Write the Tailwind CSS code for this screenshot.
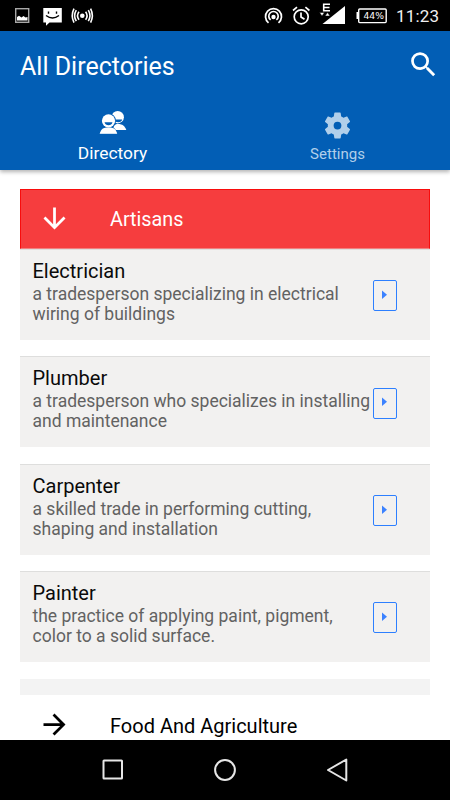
<!DOCTYPE html>
<html lang="en">
<head>
<meta charset="utf-8">
<title>All Directories</title>
<script src="https://cdn.jsdelivr.net/npm/@tailwindcss/browser@4"></script>
</head>
<body class="w-[450px] h-[800px] overflow-hidden bg-white font-[Roboto,sans-serif] flex flex-col">
<div class="h-[31px] shrink-0 bg-black flex items-center justify-between text-white">
  <svg width="100" height="31" viewBox="0 0 100 31" fill="none">
    <rect x="15.700" y="8.700" width="13" height="13.600" stroke="#a8a8a8" stroke-width="1.400"/>
    <path d="M17 20.500V17l2-1.200 2.500 1.700 2-1.500 2 1.500 2-.5v3.500z" fill="#fff"/>
    <path d="M43.300 8h18.500v14.500H49.500L46 25.800v-3.300h-2.700z" fill="#fff"/>
    <path d="M48.500 11.500v2.300M56.500 11.500v2.300M46 15.500q6.500 5 13 0" stroke="#000" stroke-width="1.400"/>
    <circle cx="82.300" cy="15.700" r="2.300" fill="#fff"/>
    <path d="M79 11.700q-3 4 0 8M85.600 11.700q3 4 0 8M76.300 10.200q-3.300 5.500 0 11M88.300 10.200q3.300 5.500 0 11M74 8.700q-3.500 7 0 14M90.600 8.700q3.500 7 0 14" stroke="#fff" stroke-width="1.600"/>
  </svg>
  <div class="flex">
    <svg width="140" height="31" viewBox="250 0 140 31" fill="none" stroke="#fff" stroke-width="1.700">
      <path d="M268.500 22.800a8 8 0 1 1 10 0M270.600 19.900a4.700 4.700 0 1 1 5.800 0"/>
      <circle cx="273.500" cy="17" r="2.200" fill="#fff" stroke="none"/>
      <circle cx="301.200" cy="16.800" r="7"/><path d="M301 12.500v4.500l3.500 2.300M293 10.500l4-3.300M309.400 10.500l-4-3.300"/>
      <path d="M345 6v18h-22.500z" fill="#fff" stroke="none"/>
      <path d="M330 4.200h-6.300v6.600h6.300M323.700 7.500h5.800" stroke-width="1.600"/>
      <path d="M319.500 12.500h5l-2.500 3.500zM325 16l2.500-3.500 2.500 3.500z" fill="#fff" stroke="#000" stroke-width=".5"/>
      <rect x="358.700" y="9" width="27.500" height="13.600" rx="1" stroke-width="1.400"/><path d="M357.300 12v7" stroke-width="1.600"/>
      <text x="363.500" y="19" textLength="20.500" lengthAdjust="spacingAndGlyphs" fill="#fff" stroke="none" font-family="DejaVu Sans" font-size="9">44%</text>
    </svg>
    <span class="w-[60px] pl-[6px] pt-[2px] leading-[29px] text-[17px] tracking-[.2px] text-[#f0f0f0]">11:23</span>
  </div>
</div>
<header class="relative h-[139px] shrink-0 bg-[#025eb5] text-white shadow-[0_2px_4px_rgba(0,0,0,.3)] flex flex-col">
  <div class="h-[70px] flex items-center justify-between pl-[20px] pr-[10.500px]">
    <h1 class="text-[25px] leading-[30px] pt-[2px]">All Directories</h1>
    <svg class="mb-[3px]" width="33" height="33" viewBox="0 0 24 24" fill="currentColor"><path d="M15.500 14h-.79l-.28-.27A6.471 6.471 0 0 0 16 9.500 6.500 6.500 0 1 0 9.500 16c1.610 0 3.090-.59 4.230-1.570l.27.28v.79l5 4.990L20.490 19l-4.990-5zm-6 0C7.010 14 5 11.990 5 9.500S7.010 5 9.500 5 14 7.010 14 9.500 11.990 14 9.500 14z"/></svg>
  </div>
  <nav class="grid grid-cols-2 h-[69px]">
    <div class="flex flex-col items-center pt-[9px]">
      <svg width="28" height="25" viewBox="0 0 28 25" fill="#fff">
        <circle cx="18.700" cy="7.200" r="6.200"/><path d="M16.500 9.500h6.700c-.5 2.800-3.500 3.300-6.700 2.300z" fill="#025eb5"/>
        <path d="M14 20c.5-4.500 2-6 5-6 4.500 0 6.800 2 8.300 6z"/>
        <g stroke="#025eb5" stroke-width="1.600"><path d="M.7 23.800c1.200-4.800 4-6.800 8.800-6.800s7.500 2 8.700 6.800z" stroke-width="1"/><circle cx="9.500" cy="10.800" r="6.700"/></g>
        <circle cx="9.500" cy="10.800" r="6.600"/>
        <path d="M.7 23.800c1.200-4.800 4-6.300 8.800-6.300s7.500 1.500 8.700 6.300z"/>
        <path d="M5.500 12.300h8c-.6 3.900-7.400 3.900-8 0z" fill="#025eb5"/>
      </svg>
      <span class="text-[17.400px] leading-[20px] mt-[8px]">Directory</span>
    </div>
    <div class="flex flex-col items-center pt-[9px] text-[#b1cfea]">
      <svg width="31" height="31" viewBox="0 0 24 24" fill="currentColor"><path d="M19.430 12.980c.04-.32.07-.64.07-.98s-.03-.66-.07-.98l2.110-1.650c.19-.15.24-.42.12-.64l-2-3.460c-.12-.22-.39-.3-.61-.22l-2.490 1c-.52-.4-1.080-.73-1.690-.98l-.38-2.650A.488.488 0 0 0 14 2h-4c-.25 0-.46.18-.49.42l-.38 2.650c-.61.25-1.170.59-1.690.98l-2.490-1c-.23-.09-.49 0-.61.22l-2 3.460c-.13.22-.07.49.12.64l2.110 1.650c-.04.32-.07.65-.07.98s.03.66.07.98l-2.110 1.650c-.19.15-.24.42-.12.64l2 3.460c.12.22.39.3.61.22l2.490-1c.52.4 1.080.73 1.690.98l.38 2.650c.03.24.24.42.49.42h4c.25 0 .46-.18.49-.42l.38-2.650c.61-.25 1.170-.59 1.690-.98l2.490 1c.23.09.49 0 .61-.22l2-3.460c.12-.22.07-.49-.12-.64zM12 15a3 3 0 1 1 0-6 3 3 0 0 1 0 6z"/></svg>
      <span class="text-[15px] leading-[18px] mt-[4px]">Settings</span>
    </div>
  </nav>
</header>
<main class="h-[570px] shrink-0 overflow-hidden px-[20px] pt-[19px]">
  <div class="h-[60px] bg-[#f63d3e] border border-b-[#f08080] border-[#f80c0c] flex items-center pl-[17px] text-white">
    <svg class="mb-[2px]" width="33" height="33" viewBox="0 0 24 24" fill="currentColor"><path d="M20 12l-1.410-1.410L13 16.170V4h-2v12.170l-5.580-5.590L4 12l8 8z"/></svg>
    <span class="ml-[39px] pt-[2px] text-[19.800px]">Artisans</span>
  </div>
  <div id="list" class="flex flex-col gap-[16.400px]"></div>
  <div class="mt-[17px] h-[16px] bg-[#f3f3f3]"></div>
  <div class="h-[60px] flex items-center pl-[18px] text-black">
    <svg class="mb-[2px]" width="33" height="33" viewBox="0 0 24 24" fill="currentColor"><path d="M12 4l-1.410 1.410L16.170 11H4v2h12.170l-5.580 5.590L12 20l8-8z"/></svg>
    <span class="ml-[39px] pt-[2px] text-[20px]">Food And Agriculture</span>
  </div>
</main>
<footer class="h-[60px] shrink-0 bg-black flex items-center justify-center gap-[82px]">
  <svg width="30" height="30" viewBox="0 0 30 30" fill="none" stroke="#e6e6e6" stroke-width="2"><rect x="5.500" y="5.500" width="18.500" height="18" rx=".5"/></svg>
  <svg width="30" height="30" viewBox="0 0 30 30" fill="none" stroke="#e6e6e6" stroke-width="2"><circle cx="15" cy="15" r="9.900"/></svg>
  <svg width="30" height="30" viewBox="0 0 30 30" fill="none" stroke="#e6e6e6" stroke-width="2" stroke-linejoin="round"><path d="M6 15L24.300 4.500v21z"/></svg>
</footer>
<script>
const rows = [
  ["Electrician", "a tradesperson specializing in electrical", "wiring of buildings"],
  ["Plumber", "a tradesperson who specializes in installing", "and maintenance"],
  ["Carpenter", "a skilled trade in performing cutting,", "shaping and installation"],
  ["Painter", "the practice of applying paint, pigment,", "color to a solid surface."]
];
document.getElementById("list").innerHTML = rows.map(([name, a, b]) => `
  <div class="h-[91px] bg-[#f2f1f0] border-t border-[#dededd] flex pl-[12.500px]">
    <div class="w-[340px] shrink-0 pt-[9px] whitespace-nowrap">
      <div class="text-[20px] leading-[24px] text-[#0a0a0a]">${name}</div>
      <div class="text-[17.500px] leading-[20px] mt-[1px] text-[#626262]">${a}<br>${b}</div>
    </div>
    <div class="mt-[30.300px] w-[24.500px] h-[31px] border border-[#2d7fff] rounded-[2px] flex items-center justify-center">
      <svg class="mb-[2px]" width="5" height="10" viewBox="0 0 5 10" fill="#3b82ff"><path d="M0 0.500L5 4.800 0 9.100z"/></svg>
    </div>
  </div>`).join("");
</script>
</body>
</html>
